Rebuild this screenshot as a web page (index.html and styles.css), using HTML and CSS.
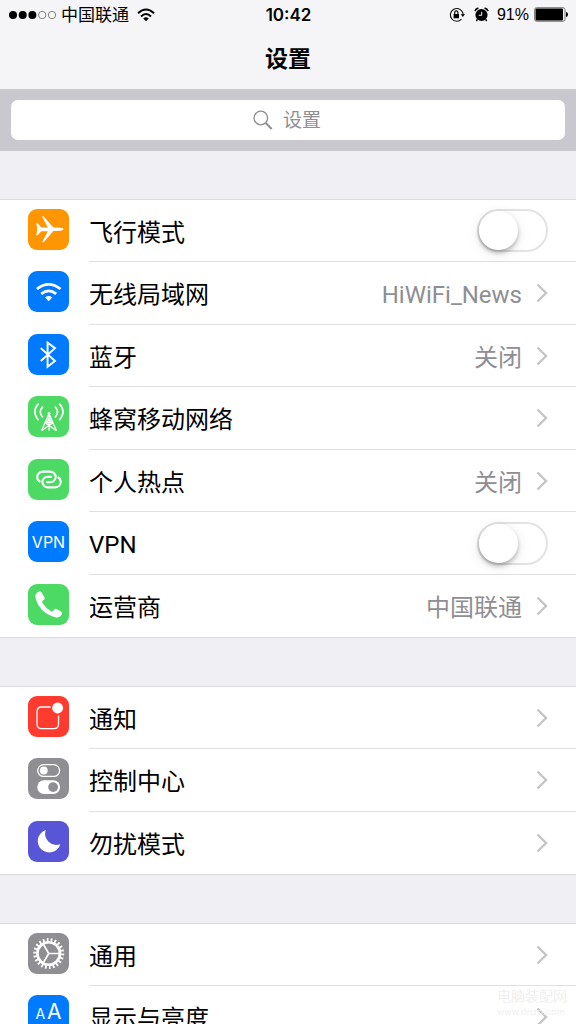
FILE: index.html
```html
<!DOCTYPE html>
<html lang="zh-CN">
<head>
<meta charset="utf-8">
<meta name="viewport" content="width=device-width, initial-scale=1">
<title>设置</title>
<link rel="stylesheet" href="styles.css">
</head>
<body>
<div class="screen">
  <header class="header">
    <div class="status">
      <div class="status-left">
        <svg class="signal" width="48" height="10" viewBox="0 0 48 10"><g><circle cx="4" cy="5" r="4"/><circle cx="13.7" cy="5" r="4"/><circle cx="23.4" cy="5" r="4"/></g><g fill="none" stroke="#666" stroke-width=".8"><circle cx="33.2" cy="5" r="3.7"/><circle cx="43" cy="5" r="3.7"/></g></svg>
        <span class="carrier">中国联通</span>
        <svg width="18" height="14" viewBox="0 0 18 14"><g fill="none" stroke="#000" stroke-width="2"><path d="M1 5.200Q9-2.100 17 5.200"/><path d="M4 8.400Q9 3.700 14 8.400"/></g><path d="M6.200 10.400Q9 8.200 11.800 10.400L9 13.200Z"/></svg>
      </div>
      <time class="clock">10:42</time>
      <div class="status-right">
        <svg width="16" height="16" viewBox="0 0 16 16"><path d="M12.500 12.200A6.400 6.400 0 1 1 13.600 5.300Q14.200 6.600 14 8" fill="none" stroke="#111" stroke-width="1.100"/><path d="M11.700 7.300H16L13.800 10Z"/><path d="M4.600 7h5.400v4.300H4.600z"/><path d="M5.700 7.200V5.600a1.600 1.700 0 0 1 3.200 0v1.600" fill="none" stroke="#000" stroke-width="1.100"/></svg>
        <svg class="alarm" width="15" height="15" viewBox="0 0 15 15"><circle cx="7.500" cy="8" r="6.100"/><path d="M3.300 12.500 2.300 14M11.700 12.500l1 1.500M1 4.200Q1.600 1.500 4.500 1.200M14 4.200Q13.400 1.500 10.500 1.200" fill="none" stroke="#000" stroke-width="1.400"/><path d="M7.700 4.800v3.500H4.800" fill="none" stroke="#f5f5f7" stroke-width="1"/></svg>
        <span class="percent">91%</span>
        <svg width="34" height="15" viewBox="0 0 34 15"><rect x=".6" y=".7" width="30.400" height="13.600" rx="2" fill="none" stroke="#777" stroke-width="1"/><rect x="1.500" y="1.600" width="27.500" height="11.800" rx="1"/><path d="M32 5q2 .4 2 2.500T32 10z"/></svg>
      </div>
    </div>
    <h1 class="title">设置</h1>
  </header>

  <div class="search-bar">
    <label class="search-field">
      <svg width="20" height="20" viewBox="0 0 20 20" fill="none" stroke="#8e8e93"><circle cx="7.800" cy="8" r="6.800" stroke-width="1.300"/><path d="M12.700 13 18.700 19" stroke-width="2"/></svg>
      <input class="search-input" type="text" placeholder="设置" aria-label="设置">
    </label>
  </div>

  <main class="groups">
    <section class="group">
      <label class="row">
        <span class="icon orange"><svg viewBox="0 0 40 40" fill="#fff"><path d="M8 14h1.400l3.600 4 6.400.1L13.800 7.600q0-.7 1.500-.3l9.500 10.800 7 .3q3 .5 3 1.400t-3 1.500l-7 .2-9.500 10.900q-1.500.4-1.500-.3l5.600-10.500-6.400.1-3.600 3.800H8l1.100-5.700Z"/></svg></span>
        <span class="body"><span class="name">飞行模式</span><input class="switch" type="checkbox" role="switch"></span>
      </label>
      <a class="row" href="#wifi">
        <span class="icon blue"><svg viewBox="0 0 40 40" fill="none" stroke="#fff" stroke-width="2.600"><path d="M8.700 17.600Q20 8.600 31.700 17.600"/><path d="M12.900 22.300Q20.200 16.600 27.500 22.300"/><path d="M16.700 25.800Q20.200 23.200 23.700 25.800L20.200 29.600Z" fill="#fff" stroke="none"/></svg></span>
        <span class="body"><span class="name">无线局域网</span><span class="value">HiWiFi_News</span><svg class="chevron" viewBox="0 0 12 20"><path d="m1.500 1.500 8.500 8.500-8.500 8.500"/></svg></span>
      </a>
      <a class="row" href="#bluetooth">
        <span class="icon blue"><svg viewBox="0 0 40 40" fill="none" stroke="#fff" stroke-width="1.900"><path d="M12.500 13.800 26.300 26.300 19.100 32V8.400l7.200 5.400L12.500 26.400"/></svg></span>
        <span class="body"><span class="name">蓝牙</span><span class="value">关闭</span><svg class="chevron" viewBox="0 0 12 20"><path d="m1.500 1.500 8.500 8.500-8.500 8.500"/></svg></span>
      </a>
      <a class="row" href="#cellular">
        <span class="icon green"><svg viewBox="0 0 40 40" fill="none" stroke="#fff" stroke-width="1.200"><path d="M13.200 33.800 20.500 17l7.300 16.800M20.500 16v18M13.200 33.800 24.300 26M27.800 33.800 16.700 26M16.700 26h7.600M18.400 21.800l5.900 4.200M22.600 21.800 16.700 26"/><circle cx="20.500" cy="16.800" r="1.300" fill="#fff" stroke="none"/><path d="M10.300 7.500q-7.300 7.600 0 16.200M14.500 10.300q-5 5.200 0 10.600M30.500 7.500q7.300 7.600 0 16.200M26.300 10.300q5 5.200 0 10.600" stroke-width="1.600"/></svg></span>
        <span class="body"><span class="name">蜂窝移动网络</span><svg class="chevron" viewBox="0 0 12 20"><path d="m1.500 1.500 8.500 8.500-8.500 8.500"/></svg></span>
      </a>
      <a class="row" href="#hotspot">
        <span class="icon green"><svg viewBox="0 0 40 40" fill="none" stroke="#fff" stroke-width="2"><path d="M12 22.400C9.800 21.200 9 19.200 9 17.700c0-3.200 2.500-5.400 5.500-5.400h7c3.200 0 5.500 2.500 5.500 5.200s-2.300 5.200-5.300 5.200h-4"/><path d="M29 17.600c2.200 1.200 3 3.200 3 4.700 0 3.200-2.500 5.400-5.500 5.400h-7c-3.200 0-5.500-2.500-5.500-5.200s2.300-5.200 5.300-5.200h4"/></svg></span>
        <span class="body"><span class="name">个人热点</span><span class="value">关闭</span><svg class="chevron" viewBox="0 0 12 20"><path d="m1.500 1.500 8.500 8.500-8.500 8.500"/></svg></span>
      </a>
      <label class="row">
        <span class="icon blue vpn" aria-hidden="true">VPN</span>
        <span class="body"><span class="name">VPN</span><input class="switch" type="checkbox" role="switch"></span>
      </label>
      <a class="row" href="#carrier">
        <span class="icon green"><svg viewBox="0 0 40 40" fill="#fff"><path d="M7.400 10.200Q9 7.300 11.300 7q1.100-.1 1.800 1l3 5.200q.6 1.200-.5 2.200l-1.500 1.300q-.7.8 0 1.800 3 4.700 8.400 8.200 1 .6 1.700-.1l1.600-1.800q.9-1 2.100-.4l4.700 2.700q1.200.8.6 2.200-2.100 4.300-6.600 3.100Q11.500 28.500 7.600 14.500 6.800 11.800 7.400 10.200Z"/></svg></span>
        <span class="body"><span class="name">运营商</span><span class="value">中国联通</span><svg class="chevron" viewBox="0 0 12 20"><path d="m1.500 1.500 8.500 8.500-8.500 8.500"/></svg></span>
      </a>
    </section>

    <section class="group">
      <a class="row" href="#notifications">
        <span class="icon red"><svg viewBox="0 0 40 40"><path d="M22 10.700H13.300Q8.800 10.700 8.800 15.200V27.300Q8.800 31.800 13.300 31.800H25.300Q29.800 31.800 29.800 27.300V19" fill="none" stroke="#fff" stroke-width="1.300"/><circle cx="28.900" cy="11.700" r="5.300" fill="#fff"/></svg></span>
        <span class="body"><span class="name">通知</span><svg class="chevron" viewBox="0 0 12 20"><path d="m1.500 1.500 8.500 8.500-8.500 8.500"/></svg></span>
      </a>
      <a class="row" href="#control">
        <span class="icon gray"><svg viewBox="0 0 40 40"><rect x="9.500" y="6.500" width="21.300" height="11.500" rx="5.750" fill="none" stroke="#fff" stroke-width="1.300"/><circle cx="15.400" cy="12.200" r="3.800" fill="#fff"/><rect x="9" y="21.800" width="22.300" height="13.200" rx="6.600" fill="#fff"/><circle cx="24.500" cy="28.400" r="4.800" fill="#8e8e93"/></svg></span>
        <span class="body"><span class="name">控制中心</span><svg class="chevron" viewBox="0 0 12 20"><path d="m1.500 1.500 8.500 8.500-8.500 8.500"/></svg></span>
      </a>
      <a class="row" href="#dnd">
        <span class="icon purple"><svg viewBox="0 0 40 40" fill="#fff"><path d="M17.400 8.800A11.200 11.200 0 1 0 31.500 22.600 10.900 10.900 0 0 1 17.400 8.800Z"/></svg></span>
        <span class="body"><span class="name">勿扰模式</span><svg class="chevron" viewBox="0 0 12 20"><path d="m1.500 1.500 8.500 8.500-8.500 8.500"/></svg></span>
      </a>
    </section>

    <section class="group">
      <a class="row" href="#general">
        <span class="icon gray"><svg viewBox="0 0 40 40" fill="none" stroke="#fff"><circle cx="20.200" cy="20" r="13.400" stroke-width="3.400" stroke-dasharray="1.800 2.200" pathLength="88"/><circle cx="20.200" cy="20" r="11" stroke-width="2.600"/><path d="M20.200 20H31M20.200 20 14.800 10.600M20.200 20l-5.400 9.400" stroke-width="1.700"/></svg></span>
        <span class="body"><span class="name">通用</span><svg class="chevron" viewBox="0 0 12 20"><path d="m1.500 1.500 8.500 8.500-8.500 8.500"/></svg></span>
      </a>
      <a class="row" href="#display">
        <span class="icon blue aa" aria-hidden="true"><small>A</small>A</span>
        <span class="body"><span class="name">显示与亮度</span><svg class="chevron" viewBox="0 0 12 20"><path d="m1.500 1.500 8.500 8.500-8.500 8.500"/></svg></span>
      </a>
    </section>
  </main>

  <div class="watermark">
    <span class="watermark-name">电脑装配网</span>
    <span class="watermark-url">www.dnzp.com</span>
  </div>
</div>
</body>
</html>
```

FILE: styles.css
```css
* {
  box-sizing: border-box;
}

body {
  margin: 0;
  background: #efeff4;
  color: #000;
  font-family: Roboto, "Noto Sans CJK SC", sans-serif;
}

.screen {
  position: relative;
  height: 100vh;
  overflow: hidden;
}

svg {
  display: block;
  flex: none;
}

.header {
  background: #f5f5f7;
  padding-bottom: 11px;
}

.status {
  display: grid;
  grid-template-columns: 1fr auto 1fr;
  align-items: center;
  height: 29px;
  padding: 0 8px 0 9px;
  font-size: 17px;
  line-height: 24px;
}

.status-left,
.status-right {
  display: flex;
  align-items: center;
}

.status-left {
  gap: 4px;
}

.carrier {
  margin-right: 4px;
}

.status-right {
  justify-content: flex-end;
  gap: 5px;
}

.alarm {
  margin: 0 3px 0 4px;
}

.percent {
  font-family: "Liberation Sans", sans-serif;
  font-size: 16px;
}

.clock {
  font-family: Inter, sans-serif;
  font-size: 17px;
  font-weight: 600;
}

.title {
  margin: 0;
  padding-top: 13px;
  font-size: 23px;
  line-height: 36px;
  font-weight: 700;
  text-align: center;
}

.search-bar {
  padding: 11px;
  background: #c9c8ce;
}

.search-field {
  display: flex;
  align-items: center;
  justify-content: center;
  gap: 10px;
  height: 40px;
  border-radius: 7px;
  background: #fff;
}

.search-input {
  width: 40px;
  padding: 0;
  border: 0;
  outline: 0;
  background: none;
  font: inherit;
  font-size: 19px;
  appearance: none;
}

.search-input::placeholder {
  color: #8e8e93;
}

.groups {
  display: grid;
  gap: 48px;
  padding-top: 48px;
}

.group {
  border: solid #dcdce0;
  border-width: 1px 0;
  background: #fff;
}

.row {
  display: flex;
  height: 62px;
  padding-left: 28px;
  color: inherit;
  text-decoration: none;
}

.row:nth-child(even) {
  height: 63px;
}

.icon {
  display: flex;
  flex: none;
  align-items: center;
  justify-content: center;
  width: 41px;
  height: 41px;
  margin: 9px 20px 0 0;
  border-radius: 9px;
  color: #fff;
}

.icon svg {
  width: 41px;
  height: 41px;
}

.orange { background: #ff9500; }
.blue { background: #007aff; }
.green { background: #4cd964; }
.red { background: #ff3b30; }
.gray { background: #8e8e93; }
.purple { background: #5856d6; }

.vpn {
  font-family: Inter, sans-serif;
  font-size: 16px;
}

.aa {
  align-items: baseline;
  gap: 2px;
  padding-top: 4px;
  font-family: Inter, sans-serif;
  font-size: 21px;
  line-height: 26px;
}

.aa small {
  font-size: 14px;
}

.body {
  display: flex;
  flex: 1;
  align-items: center;
  border-bottom: 1px solid #e0e0e3;
  padding-right: 28px;
  font-size: 24px;
  line-height: 36px;
}

.row:last-child .body {
  border-bottom-color: transparent;
}

.name,
.value {
  padding-top: 4px;
}

.name {
  flex: 1;
}

.value {
  margin-right: 14px;
  color: #8e8e93;
}

.chevron {
  width: 12px;
  height: 20px;
  fill: none;
  stroke: #c4c4c9;
  stroke-width: 2.4;
}

.switch {
  width: 71px;
  height: 43px;
  margin: 0;
  padding: 0;
  border: 2px solid #e3e3e3;
  border-radius: 22px;
  background: #fff;
  appearance: none;
}

.switch::before {
  display: block;
  width: 39px;
  height: 39px;
  border-radius: 50%;
  background: #fff;
  box-shadow: 0 3px 4px rgba(0, 0, 0, 0.25), 0 3px 14px rgba(0, 0, 0, 0.1);
  content: "";
}

.switch:checked {
  border-color: #4cd964;
  background: #4cd964;
}

.switch:checked::before {
  margin-left: 28px;
}

.watermark {
  position: absolute;
  right: 9px;
  bottom: 5px;
  display: grid;
  color: #f0f0f1;
  pointer-events: none;
}

.watermark-name {
  font-size: 14px;
  line-height: 18px;
}

.watermark-url {
  font-family: "DejaVu Sans", sans-serif;
  font-size: 9px;
  line-height: 14px;
}
```
